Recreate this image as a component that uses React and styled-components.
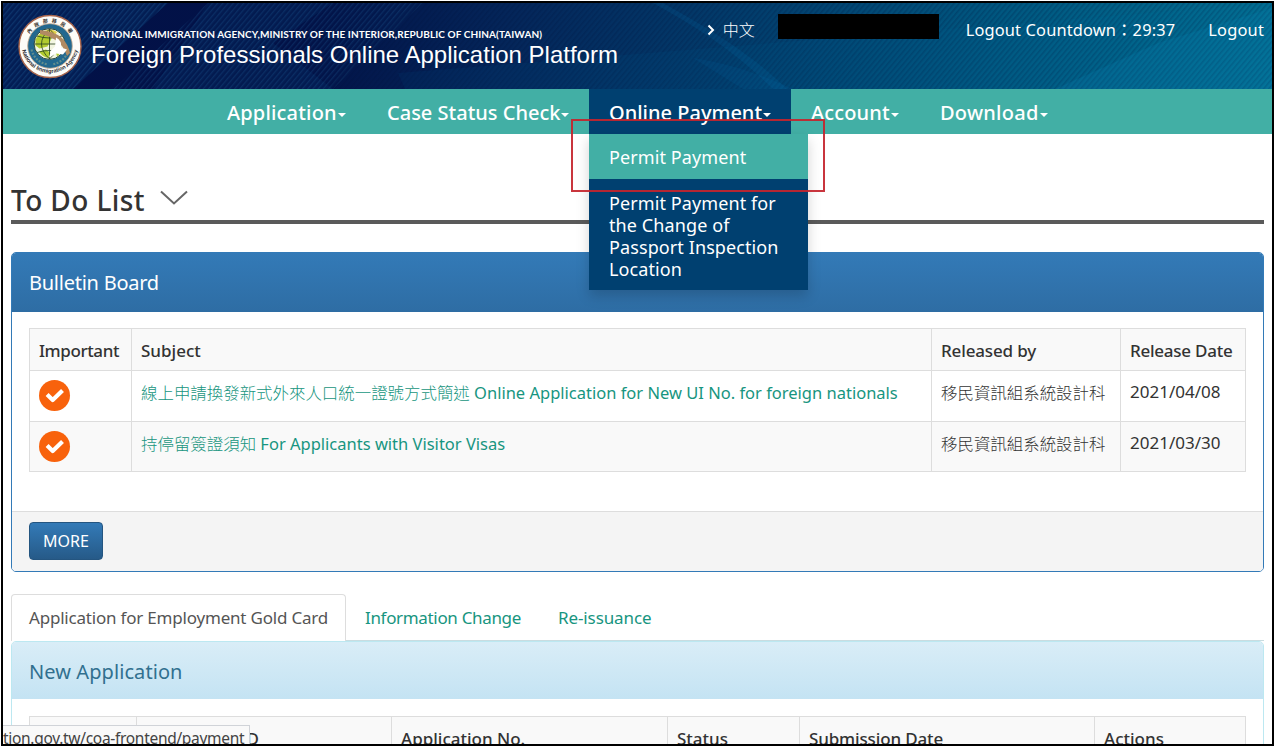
import React from "react";
import styled, { createGlobalStyle } from "styled-components";

const Global = createGlobalStyle`
  *, *::before, *::after { box-sizing: border-box; }
  html, body { margin: 0; padding: 0; background: #fff; overflow: hidden; }
  body { font-family: "Noto Sans", "Noto Sans CJK TC", sans-serif; font-size: 16px; font-weight: 400; color: #333; }
`;

const Frame = styled.div`
  position: relative;
  width: 1273px;
  height: 745px;
  margin: 1px;
  border: 2px solid #000;
  overflow: hidden;
  background: #fff;
`;

const Text = styled.span`
  display: inline-block;
  white-space: nowrap;
  letter-spacing: ${(p) => p.$ls || 0}px;
`;

const Header = styled.header`
  position: relative;
  height: 86px;
  display: flex;
  color: #fff;
  background: linear-gradient(100deg, #021148 0%, #021247 24%, #04265a 40%, #023d6c 58%, #005a82 80%, #036f92 100%);
`;

const Pattern = styled.svg`
  position: absolute;
  inset: 0;
  width: 100%;
  height: 100%;
`;

const Brand = styled.div`
  position: relative;
  display: flex;
  flex: 1;
  padding: 11px 0 0 15px;
  gap: 9px;
`;

const Titles = styled.div`
  padding-top: 14px;
  font-family: "Liberation Sans", Arial, sans-serif;
`;

const Agency = styled.div`
  font-family: Lato, sans-serif;
  font-size: 10px;
  line-height: 13px;
  font-weight: 700;
  white-space: nowrap;
  letter-spacing: 0.08px;
`;

const Platform = styled.div`
  font-size: 24px;
  line-height: 27px;
  white-space: nowrap;
`;

const Utility = styled.div`
  position: relative;
  display: flex;
  align-items: flex-start;
  font-size: 16.4px;
  line-height: 24px;
  padding: 11px 8px 0 0;
  height: 50px;
`;

const Language = styled.div`
  display: flex;
  align-items: center;
  gap: 8px;
  height: 32px;
  font-size: 16px;
  font-weight: 300;
`;

const Redacted = styled.div`
  width: 161px;
  height: 25px;
  margin: 0 27px 0 23px;
  background: #000;
`;

const UtilText = styled.div`
  line-height: 32px;
  margin-right: ${(p) => p.$gap || 0}px;
`;

const Nav = styled.nav`
  display: flex;
  height: 45px;
  padding-left: 204px;
  background: #42afa5;
`;

const NavItem = styled.div`
  position: relative;
  width: ${(p) => p.$w}px;
  padding-left: 20px;
  color: #fff;
  font-size: 20px;
  font-weight: 500;
  line-height: 48px;
  white-space: nowrap;
  background: ${(p) => (p.$active ? "#004070" : "transparent")};
`;

const Caret = styled.i`
  display: inline-block;
  margin-left: 1px;
  vertical-align: 3px;
  border: 4px solid transparent;
  border-top-color: #fff;
  border-bottom: 0;
`;

const Menu = styled.div`
  position: absolute;
  z-index: 5;
  left: 0;
  top: 45px;
  width: 219px;
  height: 156px;
  background: #004070;
  box-shadow: 0 6px 12px rgba(0, 0, 0, 0.175);
`;

const MenuItem = styled.div`
  padding: ${(p) => (p.$hover ? "12px 20px 11px" : "13px 20px 10px")};
  font-size: 18px;
  font-weight: 400;
  letter-spacing: 0.1px;
  line-height: 22px;
  white-space: nowrap;
  background: ${(p) => (p.$hover ? "#42afa5" : "transparent")};
`;

const Highlight = styled.div`
  position: absolute;
  z-index: 6;
  left: 568px;
  top: 116px;
  width: 254px;
  height: 73px;
  border: 2px solid rgba(196, 36, 44, 0.92);
`;

const Main = styled.main`
  padding: 0 8px;
`;

const Heading = styled.div`
  display: flex;
  align-items: flex-start;
  height: 90px;
  border-bottom: 4px solid #5a5a5a;
  font-size: 28px;
  font-weight: 500;
  line-height: 38px;
  padding-top: 47px;
  color: #333;
  svg { margin: 8px 0 0 13px; }
`;

const Panel = styled.section`
  margin-top: 28px;
  height: 320px;
  border: 1px solid #337ab7;
  border-radius: 5px;
  overflow: hidden;
  display: flex;
  flex-direction: column;
`;

const PanelHeading = styled.div`
  height: ${(p) => (p.$info ? 57 : 59)}px;
  padding-left: 17px;
  font-size: 20px;
  line-height: 60px;
  color: ${(p) => (p.$info ? "#31708f" : "#fff")};
  background: ${(p) => (p.$info ? "linear-gradient(#d9edf7, #c4e3f3)" : "linear-gradient(#337ab7, #2e6da4)")};
`;

const PanelBody = styled.div`
  flex: 1;
  padding: ${(p) => (p.$roomy ? 17 : 16)}px 17px 0;
`;

const PanelFooter = styled.div`
  height: 60px;
  padding: 10px 17px;
  border-top: 1px solid #ddd;
  background: #f4f4f4;
`;

const Table = styled.div`
  border: 1px solid #ddd;
  border-bottom-width: ${(p) => (p.$open ? 0 : 1)}px;
`;

const Row = styled.div`
  display: grid;
  grid-template-columns: ${(p) => p.$cols};
  height: ${(p) => p.$h}px;
  background: ${(p) => (p.$shade ? "#f9f9f9" : "#fff")};
  font-weight: ${(p) => (p.$head ? 500 : 400)};
  line-height: ${(p) => (p.$head ? 28 : 26)}px;
  & + & { border-top: 1px solid #ddd; }
`;

const Cell = styled.div`
  padding: 8px 9px 0;
  font-size: ${(p) => (p.$link ? 16.5 : 17)}px;
  white-space: nowrap;
  color: ${(p) => (p.$link ? "#179580" : "#333")};
  & + & { border-left: 1px solid #ddd; }
`;

const Han = styled.span`
  font-family: "Noto Sans CJK TC", sans-serif;
  font-weight: 300;
  font-size: 16.45px;
`;

const More = styled.button`
  display: block;
  width: 74px;
  height: 38px;
  padding: 0;
  font-family: inherit;
  font-size: 16px;
  color: #fff;
  border: 1px solid #245580;
  border-radius: 4px;
  background: linear-gradient(#337ab7, #265a88);
`;

const Tabs = styled.div`
  display: flex;
  align-items: flex-end;
  height: 69px;
  border-bottom: 1px solid #c9dce0;
  font-size: 17px;
`;

const Tab = styled.div`
  width: ${(p) => p.$w}px;
  height: 47px;
  padding-left: ${(p) => (p.$active ? 17 : 19)}px;
  line-height: 50px;
  white-space: nowrap;
  color: ${(p) => (p.$active ? "#555" : "#179580")};
  ${(p) => p.$active && "border: 1px solid #ddd; border-bottom: 0; border-radius: 4px 4px 0 0; background: #fff; margin-bottom: -1px; line-height: 46px;"}
`;

const InfoPanel = styled(Panel)`
  margin-top: 0;
  border-color: #bce8f1;
`;

const Continued = styled.span`
  display: block;
  text-align: right;
  width: 113px;
`;

const StatusBubble = styled.div`
  position: absolute;
  left: 0;
  bottom: 0;
  width: 247px;
  height: 19px;
  overflow: hidden;
  border: 1px solid #d0d3d8;
  border-width: 1px 1px 0 0;
  background: #f9f9f9;
  color: #444;
  font-size: 15.5px;
  letter-spacing: -0.3px;
  line-height: 25px;
  white-space: nowrap;
`;

function HeaderPattern() {
  return (
    <Pattern viewBox="0 0 1269 86" preserveAspectRatio="none">
      <defs>
        <pattern id="hatch" width="4" height="4" patternUnits="userSpaceOnUse" patternTransform="rotate(40)">
          <rect width="1.3" height="4" fill="#2d86c0" />
        </pattern>
        <pattern id="shade" width="4" height="4" patternUnits="userSpaceOnUse" patternTransform="rotate(40)">
          <rect width="1.6" height="4" fill="#00123c" />
        </pattern>
      </defs>
      <polygon points="0,0 165,0 70,86 0,86" fill="#0b4a80" opacity="0.22" />
      <polygon points="0,0 165,0 70,86 0,86" fill="url(#hatch)" opacity="0.22" />
      <polygon points="205,0 330,0 270,40 330,86 150,86" fill="#0b4a80" opacity="0.16" />
      <polygon points="205,0 420,0 330,86 110,86" fill="url(#hatch)" opacity="0.18" />
      <polygon points="410,0 1269,0 1269,86 320,86" fill="url(#shade)" opacity="0.22" />
      <polygon points="395,70 1269,0 1269,86 402,86" fill="#0470a0" opacity="0.08" />
      <path d="M660 0C705 25 750 52 784 86L770 86C738 54 698 26 650 0Z" fill="#0a78b8" opacity="0.14" />
      <path d="M690 55C735 62 765 75 790 86L740 86Z" fill="#0a78b8" opacity="0.1" />
      <polygon points="1052,86 1155,40 1269,5 1269,86" fill="#0a86b8" opacity="0.18" />
    </Pattern>
  );
}

function Emblem() {
  return (
    <svg width="64" height="65" viewBox="0 0 64 64">
      <defs>
        <path id="arcTop" d="M8.2 32A23.8 23.8 0 0 1 55.8 32" />
        <path id="arcBottom" d="M3.6 30A28.4 28.4 0 0 0 60.4 30" />
      </defs>
      <circle cx="32" cy="32" r="31" fill="#fdfcf8" stroke="#a9664c" strokeWidth="1.4" />
      <circle cx="32" cy="31.5" r="22.3" fill="#22688f" stroke="#c9a98d" strokeWidth="0.8" />
      <path d="M13.5 35q3 12 16 15M50.5 35q-3 12-16 15" fill="none" stroke="#7c9c8c" strokeWidth="2.2" strokeDasharray="2 1.4" opacity="0.7" />
      <circle cx="31.5" cy="29.5" r="15.4" fill="#f3f6e2" />
      <path d="M17.5 25q5-9 12-9l4 8-4 8-8 2-4-3zM21 37l7-2 5 4-2 4.5q-6 0-10-6.5zM38 38l4-3 2 2-5 5z" fill="#b2cc30" />
      <path d="M27 16.500q6-3 12 1l-3 5-6-1z" fill="#dfd04a" />
      <path d="M31.500 14.500v30M16.500 29.500h30M19 21.500q12.500 4 25 0M19 38q12.500-4 25 0M31.500 14.500q-16 15 0 30M31.500 14.500q16 15 0 30" fill="none" stroke="#27401f" strokeWidth="0.8" />
      <circle cx="31.500" cy="29.500" r="15.400" fill="none" stroke="#1d3a2c" strokeWidth="0.900" />
      <path d="M22 15.500q14 1 22 8q6 6 8 15l-3 3q-4-11-10-15q-7-5-17-7z" fill="#b18a62" />
      <path d="M38 23q6 3 5 10l6 2-4 5-7-1-7 4 2-7 4-4z" fill="#fff" />
      <text fontSize="5" fontFamily="Noto Sans CJK TC, sans-serif" fontWeight="700" fill="#3a332e" letterSpacing="3.6">
        <textPath href="#arcTop" startOffset="52%" textAnchor="middle">內政部移民署</textPath>
      </text>
      <text fontSize="5.6" fontFamily="Liberation Sans, sans-serif" fontWeight="700" fill="#2c2a30">
        <textPath href="#arcBottom" startOffset="50%" textAnchor="middle">National Immigration Agency</textPath>
      </text>
    </svg>
  );
}

const CheckIcon = styled.svg`
  display: block;
`;

function CheckMark() {
  return (
    <CheckIcon width="32" height="33" viewBox="0.5 0 32 33">
      <circle cx="16" cy="16.5" r="15.5" fill="#f8620c" />
      <path d="M8.600 15.600L14.200 21L24 11.600" fill="none" stroke="#fff" strokeWidth="4.2" strokeLinejoin="round" />
    </CheckIcon>
  );
}

const COLS = "101px 800px 189px 1fr";
const COLS2 = "106px 255px 276px 132px 295px 1fr";

export default function App() {
  return (
    <>
      <Global />
      <Frame>
        <Header>
          <HeaderPattern />
          <Brand>
            <Emblem />
            <Titles>
              <Agency>NATIONAL IMMIGRATION AGENCY,MINISTRY OF THE INTERIOR,REPUBLIC OF CHINA(TAIWAN)</Agency>
              <Platform>Foreign Professionals Online Application Platform</Platform>
            </Titles>
          </Brand>
          <Utility>
            <Language>
              <svg width="8" height="12" viewBox="0 0 8 12"><path d="M1.5 1.5L6 6L1.5 10.5" fill="none" stroke="#fff" strokeWidth="2" /></svg>
              <Text>中文</Text>
            </Language>
            <Redacted />
            <UtilText $gap={33}><Text $ls={0.15}>Logout Countdown：29:37</Text></UtilText>
            <UtilText><Text $ls={0.2}>Logout</Text></UtilText>
          </Utility>
        </Header>
        <Nav>
          <NavItem $w={160}><Text $ls={0.18}>Application</Text><Caret /></NavItem>
          <NavItem $w={222}><Text>Case Status Check</Text><Caret /></NavItem>
          <NavItem $w={202} $active>
            <Text>Online Payment</Text><Caret />
            <Menu>
              <MenuItem $hover>Permit Payment</MenuItem>
              <MenuItem>
                Permit Payment for<br />the Change of<br />Passport Inspection<br />Location
              </MenuItem>
            </Menu>
          </NavItem>
          <NavItem $w={129}><Text $ls={0.15}>Account</Text><Caret /></NavItem>
          <NavItem $w={160}><Text $ls={0.25}>Download</Text><Caret /></NavItem>
        </Nav>
        <Main>
          <Heading>
            <Text $ls={0.4}>To Do List</Text>
            <svg width="32" height="18" viewBox="0 0 32 18"><path d="M3 2.5L16 14.5L29 2.5" fill="none" stroke="#666" strokeWidth="2" /></svg>
          </Heading>
          <Panel>
            <PanelHeading><Text $ls={-0.25}>Bulletin Board</Text></PanelHeading>
            <PanelBody>
              <Table>
                <Row $cols={COLS} $h={41} $shade $head>
                  <Cell><Text $ls={-0.4}>Important</Text></Cell>
                  <Cell><Text>Subject</Text></Cell>
                  <Cell><Text $ls={-0.15}>Released by</Text></Cell>
                  <Cell><Text $ls={-0.25}>Release Date</Text></Cell>
                </Row>
                <Row $cols={COLS} $h={51}>
                  <Cell><CheckMark /></Cell>
                  <Cell $link><Han>線上申請換發新式外來人口統一證號方式簡述</Han><Text>&nbsp;Online Application for New UI No. for foreign nationals</Text></Cell>
                  <Cell><Han>移民資訊組系統設計科</Han></Cell>
                  <Cell><Text>2021/04/08</Text></Cell>
                </Row>
                <Row $cols={COLS} $h={50} $shade>
                  <Cell><CheckMark /></Cell>
                  <Cell $link><Han>持停留簽證須知</Han><Text>&nbsp;For Applicants with Visitor Visas</Text></Cell>
                  <Cell><Han>移民資訊組系統設計科</Han></Cell>
                  <Cell><Text>2021/03/30</Text></Cell>
                </Row>
              </Table>
            </PanelBody>
            <PanelFooter><More><Text>MORE</Text></More></PanelFooter>
          </Panel>
          <Tabs>
            <Tab $active $w={335}><Text $ls={-0.2}>Application for Employment Gold Card</Text></Tab>
            <Tab $w={193}><Text $ls={-0.33}>Information Change</Text></Tab>
            <Tab $w={130}><Text $ls={-0.1}>Re-issuance</Text></Tab>
          </Tabs>
          <InfoPanel>
            <PanelHeading $info><Text $ls={0.08}>New Application</Text></PanelHeading>
            <PanelBody $roomy>
              <Table $open>
                <Row $cols={COLS2} $h={42} $shade $head>
                  <Cell />
                  <Cell><Continued>D</Continued></Cell>
                  <Cell><Text>Application No.</Text></Cell>
                  <Cell><Text>Status</Text></Cell>
                  <Cell><Text $ls={-0.15}>Submission Date</Text></Cell>
                  <Cell><Text>Actions</Text></Cell>
                </Row>
              </Table>
            </PanelBody>
          </InfoPanel>
        </Main>
        <Highlight />
        <StatusBubble>tion.gov.tw/coa-frontend/payment</StatusBubble>
      </Frame>
    </>
  );
}
